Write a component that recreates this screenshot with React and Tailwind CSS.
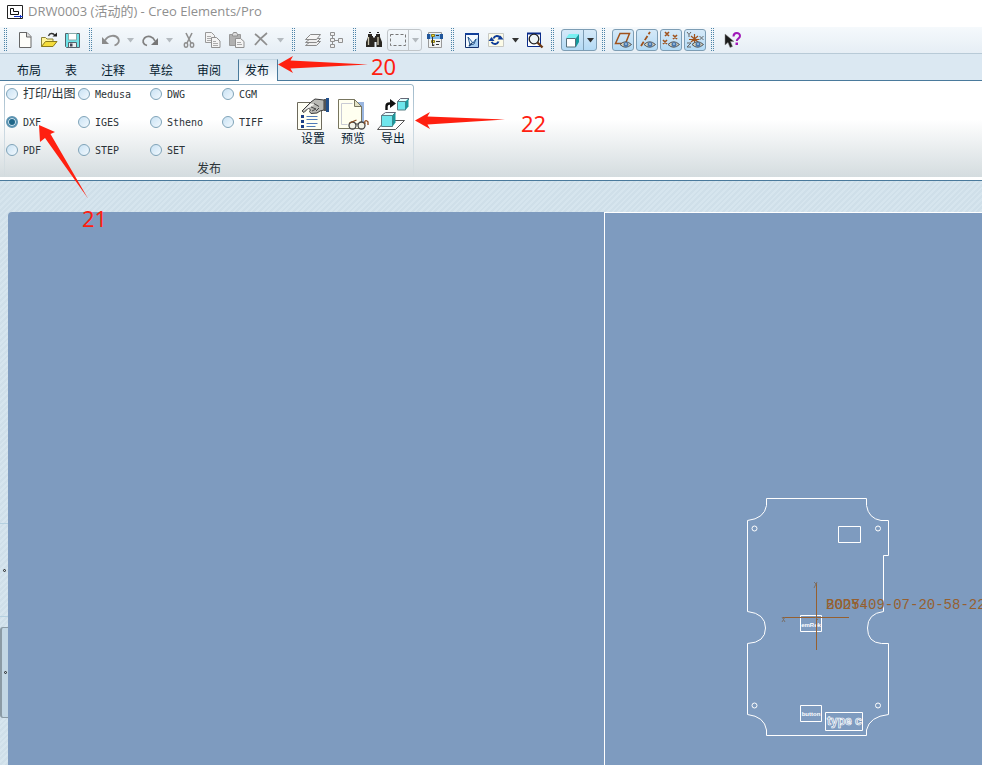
import React, { useState } from 'react';

// ── Ribbon data ──────────────────────────────────────────────
const TABS = ['布局', '表', '注释', '草绘', '审阅', '发布'];

const FORMATS = [
  '打印/出图', 'Medusa', 'DWG', 'CGM',
  'DXF', 'IGES', 'Stheno', 'TIFF',
  'PDF', 'STEP', 'SET',
];

// ── Small icons (18 x 18) ────────────────────────────────────
const Icon = ({ children }) => (
  <svg viewBox="0 0 18 18" className="h-[18px] w-[18px] shrink-0" fill="none" aria-hidden="true">
    {children}
  </svg>
);

const NewIcon = () => (
  <Icon>
    <path d="M3.500 1.500h7.500l4 4v11H3.500z" fill="#fdfdfa" stroke="#666" />
    <path d="M10.500 1.500v4.500h4.500" fill="#ddd" stroke="#666" />
  </Icon>
);

const OpenIcon = () => (
  <Icon>
    <path d="M1.500 15.500v-9h4l1.500 1.500h6v3" fill="#fff59a" stroke="#8a8138" />
    <path d="M1.500 15.500l4-5h11.500l-4 5z" fill="#f4dc3c" stroke="#8a7a1c" />
    <path d="M8.500 5c1-3 4.500-3.500 6.500-.5" stroke="#333" strokeWidth="1.300" />
    <path d="M12.500 5.500h4.500V1.500z" fill="#222" />
  </Icon>
);

const SaveIcon = () => (
  <Icon>
    <path d="M1.500 2.500h14v14h-13l-1-1z" fill="#6fe3e8" stroke="#55636b" />
    <path d="M4.500 2.500h8v6.500h-8z" fill="#fff" stroke="#8aa" />
    <path d="M4.500 11.500h8v5h-8z" fill="#e9eef0" stroke="#55636b" />
    <path d="M6 12.500h2.500v3H6z" fill="#445" />
  </Icon>
);

const UndoIcon = () => (
  <Icon>
    <path d="M3 9.500C6 4 14 3 16.500 8c1.200 3-1 5.500-4 6.500" stroke="#909090" strokeWidth="1.800" />
    <path d="M0 6v7h7z" fill="#8a8a8a" />
  </Icon>
);

const RedoIcon = () => (
  <Icon>
    <path d="M6 14.500C2 13.500.8 10 3.500 7c3.500-3 8.500-1.500 10.500 3" stroke="#808080" strokeWidth="1.800" />
    <path d="M17 7v7h-7z" fill="#777" />
  </Icon>
);

const CutIcon = () => (
  <Icon>
    <path d="M6 2l5 10M12 2L7 12" stroke="#8f8f8f" strokeWidth="1.600" />
    <ellipse cx="6" cy="14" rx="1.700" ry="2.200" stroke="#8f8f8f" strokeWidth="1.400" />
    <ellipse cx="12" cy="14" rx="1.700" ry="2.200" stroke="#8f8f8f" strokeWidth="1.400" />
  </Icon>
);

const CopyIcon = () => (
  <Icon>
    <path d="M1.500 1.500h6l3 3v7h-9z" fill="#f4f4f4" stroke="#999" />
    <path d="M3 5.500h4M3 7.500h5M3 9.500h5" stroke="#aaa" />
    <path d="M7.500 6.500h5l3.500 3.500v6.500H7.500z" fill="#f4f4f4" stroke="#909090" />
    <path d="M9 10.500h3M9 12.500h5M9 14.500h5" stroke="#aaa" />
  </Icon>
);

const PasteIcon = () => (
  <Icon>
    <path d="M1.500 3.500h11v11h-11z" fill="#b0b0b0" stroke="#999" />
    <path d="M4.500 3.500l1-2h3l1 2v1.500h-5z" fill="#ddd" stroke="#909090" />
    <path d="M7.500 7.500h5l3.500 3v6H7.500z" fill="#f4f4f4" stroke="#909090" />
    <path d="M9 11.500h4M9 13.500h5" stroke="#aaa" />
  </Icon>
);

const DeleteIcon = () => (
  <Icon>
    <path d="M3 3c4 3 8 7 12 11M15 2C10 6 6 10 3 14" stroke="#8f8f8f" strokeWidth="1.700" />
  </Icon>
);

const LayersIcon = () => (
  <Icon>
    <path d="M1.500 14.500l5-4h10l-4 4z" fill="#eee" stroke="#8a8a8a" />
    <path d="M1.500 11.500l5-4h10l-4 4z" fill="#eee" stroke="#8a8a8a" />
    <path d="M1.500 8.500l5-5h10l-4 5z" fill="#f6f6f6" stroke="#8a8a8a" />
  </Icon>
);

const TreeIcon = () => (
  <Icon>
    <path d="M4.500 4v10M4.500 9.500h6" stroke="#909090" />
    <path d="M2.500 1.500h4v3h-4zM2.500 7.500h4v3h-4zM2.500 13.500h4v3h-4zM10.500 7.500h4v4h-4z" fill="#f0f0f0" stroke="#909090" />
  </Icon>
);

const BinocularsIcon = () => (
  <Icon>
    <path d="M3 3h4v2h1v1.500h2V5h1V3h4v3l2 5v5h-5.500v-5h-1V11h-1v5H1v-5l2-5z" fill="#2a2722" />
    <path d="M3.500 6v8M13 6v8" stroke="#cfc8b0" strokeWidth="1.300" />
    <path d="M4 1.500h2M12 1.500h2" stroke="#222" />
  </Icon>
);

const MarqueeIcon = () => (
  <Icon>
    <path d="M1.500 3.500h15v11h-15z" stroke="#777" strokeDasharray="3 2" />
  </Icon>
);

const FilterTreeIcon = () => (
  <Icon>
    <path d="M2.500 1.500h13v15h-13z" fill="#f1f3f3" stroke="#999" />
    <path d="M1 3h16v5H1z" fill="#7fbcf0" />
    <path d="M1 3h3v5H1zM14 3h3v5h-3z" fill="#1f559a" />
    <path d="M5.500 3.500h3v2h-3zM5.500 9.500h3v2h-3z" fill="#f0dc30" stroke="#8a7a1c" />
    <path d="M10 4.500h3M10 10.500h4M10 13.500h3M6.500 6v8h2M6 14.500h2" stroke="#333" />
  </Icon>
);

const RepaintIcon = () => (
  <Icon>
    <path d="M2.500 2.500h13v14h-13z" fill="#f4faff" stroke="#12306e" />
    <path d="M2 3h14" stroke="#12409a" strokeWidth="2" />
    <path d="M15 6v10H5z" fill="#a5cdf2" />
    <path d="M5 6l5 6 3-4-2 5-4 1z" fill="#e8f6ff" stroke="#27588e" />
    <path d="M6 15l3-3" stroke="#1c3f70" strokeWidth="1.500" />
  </Icon>
);

const RefreshIcon = () => (
  <Icon>
    <path d="M1.500 2.500h15v13h-15z" fill="#fcfbe8" stroke="#c7c9c4" />
    <path d="M6.500 7.500c1-3 5-3.500 7-.5M11.500 10.500c-1 3-5 3.500-7 .5" stroke="#0f3c98" strokeWidth="2" />
    <path d="M10.500 8.500h6l-3-4zM1.500 10l3-4 3 4z" fill="#0f3c98" />
  </Icon>
);

const ZoomIcon = () => (
  <Icon>
    <path d="M1.500 2.500h13v13h-13z" fill="#fff" stroke="#0a2c8a" />
    <path d="M1 2.500h14" stroke="#0a2c8a" strokeWidth="2" />
    <circle cx="8" cy="8" r="4.800" fill="#eef4f6" stroke="#222" strokeWidth="1.300" />
    <path d="M11.500 11.500l5 5" stroke="#6d3a16" strokeWidth="2.400" />
  </Icon>
);

const CubeIcon = () => (
  <Icon>
    <path d="M2 7l3-4h10l-3 4z" fill="#78f0f2" />
    <path d="M12 7l3-4v8l-3 5z" fill="#149a9c" />
    <path d="M2.500 7.500h9v8.500h-9z" fill="#fff" stroke="#55707c" />
  </Icon>
);

// eye overlay that every display toggle carries
const Eye = () => (
  <g>
    <path d="M6 13.500q5.500-5.500 11.500 0-6 5.500-11.500 0z" fill="#d7cfb6" stroke="#4f5358" />
    <circle cx="12" cy="13.500" r="2.500" fill="#4a76a8" />
    <circle cx="12" cy="13" r="1" fill="#9cc4ea" />
  </g>
);

const PlaneIcon = () => (
  <Icon>
    <path d="M1.500 12.500L6 2.500h9.500l-4 10z" stroke="#a0521c" strokeWidth="1.500" />
    <Eye />
  </Icon>
);

const AxisIcon = () => (
  <Icon>
    <path d="M3 15L12 1" stroke="#a0521c" strokeWidth="1.800" strokeDasharray="5 2" />
    <Eye />
  </Icon>
);

const PointIcon = () => (
  <Icon>
    <path d="M3 1l4 4M7 1L3 5M11 4l4 4M15 4l-4 4M1 9l4 4M5 9l-4 4" stroke="#a0521c" strokeWidth="1.600" />
    <Eye />
  </Icon>
);

const CsysIcon = () => (
  <Icon>
    <path d="M8.500 3v9M5 5l7 6M12 5l-7 6M3 8.500h10" stroke="#a0521c" strokeWidth="1.200" />
    <path d="M1 1l2 2.500L5 1M3 3.500V6M13.500 5l4 4M17.500 5l-4 4M1 12h4l-4 4h4" stroke="#666" />
    <Eye />
  </Icon>
);

const HelpIcon = () => (
  <Icon>
    <path d="M2 3v11l3-2.500 2 5 2.500-1-2-5H11z" fill="#1c1c1c" stroke="#888" strokeWidth=".5" />
    <path d="M10.500 5.500c0-4.500 6.500-4.500 6.500-.5 0 2.500-3.200 2.500-3.200 5" stroke="#a018b8" strokeWidth="2" />
    <path d="M12.500 11.500h2.500v2.500h-2.500z" fill="#a018b8" />
  </Icon>
);

// ── Ribbon icons (32 x 33) ───────────────────────────────────
const BigIcon = ({ children }) => (
  <svg viewBox="0 0 32 33" className="h-[33px] w-8" fill="none" aria-hidden="true">
    {children}
  </svg>
);

const SettingsIcon = () => (
  <BigIcon>
    <path d="M.5 4.500h24v27H.5z" fill="#fffff4" stroke="#6d6a5c" />
    <path d="M9.500 18.500h11M9.500 21.500h11M9.500 25.500h11M9.500 28.500h9" stroke="#4f7ab8" />
    <path d="M4 17h3v3H4zM4 22h3v3H4zM4 27h3v3H4z" fill="#1c3f86" />
    <path d="M5 13l9-9 4-3 9 1v10l-4 1-3 2-6 .5-1.500-2 1-1.500-2-2L7 14.500z" fill="#b9b9b5" stroke="#3b3b3b" />
    <path d="M6.500 12.500l7-7 4 1-5 3z" fill="#f2f2ee" />
    <path d="M14 9l5 2M17 5.500l5 3M19 13l3-3M15 13l4-2" stroke="#444" />
    <path d="M27 1h2v12h-2z" fill="#555" />
    <path d="M29 0h3v14h-3z" fill="#24508a" />
  </BigIcon>
);

const PreviewIcon = () => (
  <BigIcon>
    <path d="M4 4h23v25H4z" fill="#9ab6e0" />
    <path d="M1.500 1.500h16l7 7v22h-23z" fill="#fffff0" stroke="#77755e" />
    <path d="M17.500 1.500v7h7z" fill="#e3e3c6" stroke="#77755e" />
    <path d="M4.500 5.500h11M4.500 5.500v21h6" stroke="#c9cbd4" />
    <circle cx="15.500" cy="27.500" r="3.500" fill="#f3f3e8" stroke="#444" strokeWidth="1.300" />
    <circle cx="24.500" cy="27.500" r="3.500" fill="#f3f3e8" stroke="#444" strokeWidth="1.300" />
    <path d="M18.500 26.500q1.500-1.500 3 0" stroke="#444" />
    <path d="M12.500 25l7-3M28 26c-1-4 1.500-4 3-2v3" stroke="#8a4c20" strokeWidth="1.300" />
  </BigIcon>
);

const ExportIcon = () => (
  <BigIcon>
    <path d="M.5 31.500l8-9h19l-9 9z" fill="#fff" stroke="#555" />
    <path d="M4.500 17.500l4-3h10l-3 3z" fill="#e6ffff" stroke="#667" />
    <path d="M4.500 17.500h11v11h-11z" fill="#6fe6ec" stroke="#5b8086" />
    <path d="M15.500 17.500l3-3v10l-3 4z" fill="#1b989c" />
    <path d="M20.500 3.500l3-3h9l-3 3z" fill="#e6ffff" stroke="#667" />
    <path d="M20.500 3.500h8v8.500h-8z" fill="#6fe6ec" stroke="#5b8086" />
    <path d="M28.500 3.500l3-3v8l-3 3.500z" fill="#1b989c" />
    <path d="M9.500 12V8.500q0-3 3-3h2" stroke="#111" strokeWidth="2.400" />
    <path d="M13 1l6 4.500-6 4.500z" fill="#111" />
  </BigIcon>
);

const COMMANDS = [
  { label: '设置', icon: <SettingsIcon /> },
  { label: '预览', icon: <PreviewIcon /> },
  { label: '导出', icon: <ExportIcon /> },
];

// ── Toolbar pieces ───────────────────────────────────────────
const Grip = () => (
  <span className="ml-[3px] mr-[6px] h-6 w-1 shrink-0 bg-[conic-gradient(#4d84a8_25%,transparent_0)] bg-size-[2px_2px]" />
);

const ToolButton = ({ label, children }) => (
  <button type="button" aria-label={label} className="flex h-6 w-6 shrink-0 items-center justify-center">
    {children}
  </button>
);

const Caret = ({ dark }) => (
  <svg viewBox="0 0 7 5" className="h-[5px] w-[7px]" aria-hidden="true">
    <path d="M0 0h7L3.500 4.500z" fill={dark ? '#333' : '#b4babf'} />
  </svg>
);

const DropButton = ({ label, dark }) => (
  <button type="button" aria-label={label} className="flex h-6 w-[15px] shrink-0 items-center justify-center">
    <Caret dark={dark} />
  </button>
);

const ToggleButton = ({ label, children }) => (
  <button
    type="button"
    aria-label={label}
    aria-pressed="true"
    className="mx-px flex h-[22px] w-[22px] shrink-0 items-center justify-center rounded-[3px] border border-[#7d9db4] bg-linear-to-b from-[#d5e9f8] to-[#b3daf5]"
  >
    {children}
  </button>
);

const Toolbar = () => (
  <div className="flex h-[27px] items-center overflow-hidden border-b border-[#b8cad7] bg-linear-to-b from-[#f5f9fc] to-[#e6eef5]" role="toolbar">
    <Grip />
    <ToolButton label="新建"><NewIcon /></ToolButton>
    <ToolButton label="打开"><OpenIcon /></ToolButton>
    <ToolButton label="保存"><SaveIcon /></ToolButton>
    <Grip />
    <div className="flex pl-px">
      <ToolButton label="撤消"><UndoIcon /></ToolButton>
      <DropButton label="撤消列表" />
      <ToolButton label="重做"><RedoIcon /></ToolButton>
      <DropButton label="重做列表" />
      <ToolButton label="剪切"><CutIcon /></ToolButton>
      <ToolButton label="复制"><CopyIcon /></ToolButton>
      <ToolButton label="粘贴"><PasteIcon /></ToolButton>
      <ToolButton label="删除"><DeleteIcon /></ToolButton>
      <DropButton label="删除选项" />
    </div>
    <Grip />
    <ToolButton label="层"><LayersIcon /></ToolButton>
    <ToolButton label="模型树"><TreeIcon /></ToolButton>
    <Grip />
    <ToolButton label="查找"><BinocularsIcon /></ToolButton>
    <div className="mx-px flex h-[22px] w-[35px] shrink-0 items-center rounded-[3px] border border-[#c0c5c9]">
      <button type="button" aria-label="框选" className="flex h-full flex-1 items-center justify-center border-r border-[#c0c5c9]">
        <MarqueeIcon />
      </button>
      <button type="button" aria-label="框选选项" className="flex h-full w-3 items-center justify-center">
        <Caret />
      </button>
    </div>
    <ToolButton label="选择过滤器"><FilterTreeIcon /></ToolButton>
    <Grip />
    <ToolButton label="重画"><RepaintIcon /></ToolButton>
    <ToolButton label="更新"><RefreshIcon /></ToolButton>
    <DropButton label="更新选项" dark />
    <ToolButton label="缩放"><ZoomIcon /></ToolButton>
    <Grip />
    <div className="mx-px flex h-[22px] w-9 shrink-0 items-center rounded-[3px] border border-[#7d9db4] bg-linear-to-b from-[#d5e9f8] to-[#b3daf5]">
      <button type="button" aria-label="着色" className="flex h-full flex-1 items-center justify-center border-r border-[#7d9db4]">
        <CubeIcon />
      </button>
      <button type="button" aria-label="显示样式" className="flex h-full w-3 items-center justify-center">
        <Caret dark />
      </button>
    </div>
    <Grip />
    <ToggleButton label="平面显示"><PlaneIcon /></ToggleButton>
    <ToggleButton label="轴显示"><AxisIcon /></ToggleButton>
    <ToggleButton label="点显示"><PointIcon /></ToggleButton>
    <ToggleButton label="坐标系显示"><CsysIcon /></ToggleButton>
    <Grip />
    <ToolButton label="帮助"><HelpIcon /></ToolButton>
  </div>
);

// ── Tab strip ────────────────────────────────────────────────
const TabStrip = ({ active, onSelect }) => (
  <div className="flex h-[27px] items-end border-b border-[#4a7a9c] bg-[#dbe8f2] pl-[5px]" role="tablist">
    {TABS.map((tab) => (
      <button
        key={tab}
        type="button"
        role="tab"
        aria-selected={tab === active}
        onClick={() => onSelect(tab)}
        className={
          tab === active
            ? '-mb-px ml-[5px] h-[22px] border-x border-t border-x-[#4a7a9c] border-t-[#c5d6e2] bg-linear-to-b from-[#d9e6f0] to-white pl-[6px] pr-2 text-xs leading-5 text-[#06202f]'
            : 'h-[22px] px-3 pt-[3px] text-xs leading-5 text-[#06202f]'
        }
      >
        {tab}
      </button>
    ))}
  </div>
);

// ── Publish ribbon ───────────────────────────────────────────
const PublishRibbon = () => {
  const [format, setFormat] = useState('DXF');

  return (
    <div className="border-b border-[#4a7a9c] bg-white pb-[3px]">
      <div className="bg-linear-to-b from-white from-40% to-[#d4dcdf] pl-1 pt-[3px]">
        <section className="relative w-[410px] px-px pt-px before:pointer-events-none before:absolute before:inset-0 before:rounded-t-[3px] before:border before:border-b-0 before:border-[#9db8c9] before:[mask-image:linear-gradient(#000,transparent)]">
          <div className="flex pl-px pt-px">
            <div className="grid w-72 shrink-0 grid-cols-4 content-start gap-y-3" role="radiogroup" aria-label="发布">
              {FORMATS.map((name) => (
                <label key={name} className="flex h-4 items-center gap-[5px] whitespace-nowrap text-[#2c3438]">
                  <input
                    type="radio"
                    name="format"
                    value={name}
                    checked={format === name}
                    onChange={() => setFormat(name)}
                    className="h-3 w-3 shrink-0 appearance-none rounded-full border border-[#7fa3b8] bg-linear-to-br from-[#c9e2f4] to-[#f2f9fe] checked:border-2 checked:border-[#5c93b1] checked:bg-none checked:bg-[#1f6688] checked:shadow-[inset_0_0_0_1px_#cfe4f0]"
                  />
                  <span className={name === '打印/出图' ? 'text-xs' : "font-['DejaVu_Sans_Mono',monospace] text-[10px]"}>
                    {name}
                  </span>
                </label>
              ))}
            </div>
            <div className="-ml-px flex shrink-0 pt-3">
              {COMMANDS.map(({ label, icon }) => (
                <button key={label} type="button" className="flex w-10 flex-col items-center text-xs leading-4 text-[#06202f]">
                  {icon}
                  {label}
                </button>
              ))}
            </div>
          </div>
          <h2 className="pt-[3px] text-center text-xs leading-4 text-[#2c3438]">发布</h2>
        </section>
      </div>
    </div>
  );
};

// ── Collapsed side panels on the left edge ───────────────────
const SideRail = () => (
  <aside className="flex w-2 shrink-0 flex-col pt-[311px]">
    <div className="flex h-[94px] items-center justify-center border-y border-[#b4d0e0]">
      <span className="h-[3px] w-[3px] rounded-full border border-[#222]" />
    </div>
    <div className="mt-[10px] flex h-[91px] items-center justify-center rounded-l-[3px] border-y border-l-2 border-[#8b9ba5] bg-[#c3d7e4]">
      <span className="h-[3px] w-[3px] rounded-full border border-[#222]" />
    </div>
  </aside>
);

// ── Part outline on the drawing sheet ────────────────────────
const PartDrawing = () => (
  <svg viewBox="0 0 260 260" className="absolute left-[125px] top-[272px] h-[260px] w-[260px]" fill="none" stroke="#fff">
    <path d="M36.500 13.500h100v7q2 13 14.500 15h7.500v35h-5v56q-16 2-16 16.500t14 15.500h7v71q-19 2-22 15.500v5.500h-100v-5.500q-2-13.500-19-15.500v-71q18-1 18-15.500t-18-16.500v-91q17-2 19-15z" />
    <circle cx="24.500" cy="43.500" r="2.500" />
    <circle cx="148" cy="43.500" r="2.500" />
    <circle cx="24.500" cy="220.500" r="2.500" />
    <circle cx="148" cy="220.500" r="2.500" />
    <path d="M108.500 41.500h22v16h-22zM70.500 130.500h21v16h-21zM70.500 220.500h21v16h-21zM95.500 227.500h37v18h-37z" />
    <g fill="#fff" stroke="none" fontFamily="'Liberation Sans', sans-serif" fontSize="6" fontWeight="700" textAnchor="middle">
      <text x="81" y="142">emRek</text>
      <text x="81" y="231">button</text>
    </g>
    <text x="97" y="240" fontFamily="'Liberation Sans', sans-serif" fontSize="12" fontWeight="700" strokeWidth=".7">type c</text>
    <path d="M86.500 98v67M53 132.500h66" stroke="#96602f" />
    <path d="M84 97l2 2 1-2M86 99l-2 4M52 132l3 5M55 132l-3 5M85 132l3 3" stroke="#77706c" />
    <g fill="#96602f" stroke="none" fontFamily="'Liberation Mono', monospace" fontSize="14">
      <text x="96" y="124">BODY4</text>
      <text x="96" y="124">2025-09-07-20-58-22</text>
    </g>
  </svg>
);

// ── Red callouts ─────────────────────────────────────────────
const Callouts = () => (
  <div className="pointer-events-none text-[22px] leading-5 text-[#ff2010]">
    <svg viewBox="0 0 90 18" className="absolute left-[278px] top-14 h-[18px] w-[90px]" fill="#ff2010">
      <path d="M0 8.500L15 0l-2.500 4.500L90 8.500l-77.500 4L15 17z" />
    </svg>
    <span className="absolute left-[371px] top-14">20</span>
    <svg viewBox="0 0 90 18" className="absolute left-[415px] top-28 h-[18px] w-[90px]" fill="#ff2010">
      <path d="M0 8.500L15 0l-2.500 4.500L90 7.500l-77.500 5L15 17z" />
    </svg>
    <span className="absolute left-[521px] top-[113px]">22</span>
    <svg viewBox="0 0 50 74" className="absolute left-[39px] top-[125px] h-[74px] w-[50px]" fill="#ff2010">
      <path d="M0 0l16 7-4.500 2L49 73.500 6 13l-5 4z" />
    </svg>
    <span className="absolute left-[82px] top-52">21</span>
  </div>
);

const App = () => {
  const [tab, setTab] = useState('发布');

  return (
    <div className="relative flex min-h-screen flex-col overflow-hidden bg-[#d0e0ea] font-['Noto_Sans','Noto_Sans_CJK_SC',sans-serif]">
      <header className="flex h-[27px] items-center gap-[5px] bg-white pb-[3px] pl-[7px]">
        <svg viewBox="0 0 16 14" className="h-[14px] w-4" fill="none" aria-hidden="true">
          <path d="M.5.500h15v13H.500z" stroke="#222" />
          <path d="M3.500 3.500h3v3h5v3h-8z" stroke="#111" />
          <path d="M7 11.500h9M13.500 10v3" stroke="#1030c0" />
        </svg>
        <h1 className="font-['Open_Sans','Noto_Sans_CJK_SC',sans-serif] text-[13px] text-[#8f8f8f]">
          DRW0003 (活动的) - Creo Elements/Pro
        </h1>
      </header>
      <Toolbar />
      <TabStrip active={tab} onSelect={setTab} />
      <PublishRibbon />

      <main className="flex flex-1 bg-[repeating-linear-gradient(135deg,#cfdfe9_0_2px,#d6e5ee_2px_4px)] pt-[31px]">
        <SideRail />
        <div className="flex flex-1 overflow-hidden rounded-tl-[4px] bg-[#7e9bbf]">
          <div className="w-[596px] shrink-0" />
          <div className="relative flex-1 overflow-hidden border-l border-t border-white">
            <PartDrawing />
          </div>
        </div>
      </main>

      <Callouts />
    </div>
  );
};

export default App;
